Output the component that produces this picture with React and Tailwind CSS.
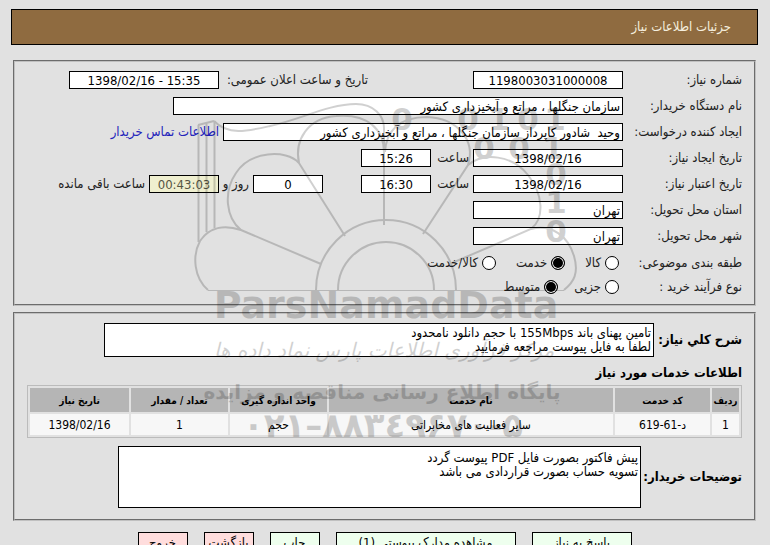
import { useState } from "react";

const inputBase =
  "h-[18px] shrink-0 border border-black px-0.5 text-[13px] leading-4 outline-none";

const Campo = ({ id, value, className, color = "bg-white text-black" }) => (
  <input id={id} type="text" readOnly value={value} className={`${inputBase} ${color} ${className}`} />
);

const Fila = ({ id, label, children }) => (
  <div className="flex h-[18px] items-center gap-1 whitespace-nowrap">
    <label htmlFor={id} className="w-[115px] shrink-0">
      {label}
    </label>
    {children}
  </div>
);

const Opcion = ({ name, label, checked, onChange }) => (
  <label className="flex items-center gap-1">
    <input
      type="radio"
      name={name}
      checked={checked}
      onChange={onChange}
      className="size-[14px] appearance-none rounded-full border border-black bg-white checked:bg-black checked:shadow-[inset_0_0_0_1px_white]"
    />
    {label}
  </label>
);

const columns = [
  { title: "ردیف", width: "w-[27px]" },
  { title: "کد خدمت", width: "w-[95px]" },
  { title: "نام خدمت", width: "" },
  { title: "واحد اندازه گیری", width: "w-[97px]" },
  { title: "تعداد / مقدار", width: "w-[97px]" },
  { title: "تاریخ نیاز", width: "w-[99px]" },
];

const rows = [["1", "د-61-619", "سایر فعالیت های مخابراتی", "حجم", "1", "1398/02/16"]];

const buttons = [
  { text: "پاسخ به نیاز", className: "w-[100px] bg-[#eeffee]" },
  { text: "مشاهده مدارک پیوستی (1)", className: "w-[180px] bg-[#eeffee]" },
  { text: "چاپ", className: "w-[50px] bg-[#eeffee]" },
  { text: "بازگشت", className: "w-[50px] bg-[#ffdddd]" },
  { text: "خروج", className: "w-[50px] bg-[#ffdddd]" },
];

// Dígitos binarios alrededor de la flor
const digits = [
  { x: 402, y: 130, value: "0" },
  { x: 468, y: 130, value: "0" },
  { x: 499, y: 130, value: "1" },
  { x: 528, y: 130, value: "0" },
  { x: 555, y: 130, value: "1" },
  { x: 484, y: 159, value: "0" },
  { x: 519, y: 159, value: "0" },
  { x: 553, y: 159, value: "1" },
  { x: 556, y: 185, value: "0" },
  { x: 556, y: 213, value: "1" },
  { x: 556, y: 242, value: "0" },
];

// Marca de agua sobre toda la ficha
const MarcaDeAgua = () => (
  <svg
    viewBox="190 90 390 360"
    className="pointer-events-none absolute top-[90px] left-1/2 h-[360px] w-[390px] -translate-x-1/2 overflow-visible opacity-[0.18]"
    aria-hidden="true"
  >
    <g fill="none" stroke="black" strokeWidth="2">
      <path d="M208 290C194 278 192 256 200 241C210 226 226 225 241 230L321 264" />
      <path d="M241 230C226 218 223 192 236 173C250 151 286 149 299 163L345 236" />
      <path d="M299 163C294 140 308 118 336 116C368 113 384 130 384 152V225" />
      <path d="M385 152C386 132 398 117 427 117C457 118 476 140 468 165L423 234" />
      <path d="M468 165C484 152 512 155 528 175C543 194 545 218 531 229L452 263" />
      <path d="M531 229C552 224 568 236 574 256C579 273 574 282 564 290" />
      <path d="M316 290A70 70 0 0 1 456 290M338 290A48 48 0 0 1 434 290" />
      <path d="M208 290.500H564" strokeWidth="1" />
      <path d="M198.500 125V242M206.500 123V232M214.500 121V228M198 125L214 121" />
      <path d="M214 121C228 136 248 131 270 126C300 120 328 104 356 104C374 104 384 116 384 128V225" />
    </g>
    <g textAnchor="middle" direction="ltr" fontFamily="DejaVu Sans" fontWeight="bold">
      {digits.map((digit) => (
        <text key={`${digit.x}-${digit.y}`} x={digit.x} y={digit.y} fontSize="31">
          {digit.value}
        </text>
      ))}
      <text x="386" y="318" fontSize="38">
        ParsNamadData
      </text>
      <text x="383" y="437" fontSize="34">
        ۰۲۱–۸۸۳٤۹۶۷۰-۵
      </text>
    </g>
    <g textAnchor="middle" direction="rtl" fontFamily="DejaVu Sans">
      <text x="384" y="357" fontSize="20" fontStyle="italic">
        مرکز فرآوری اطلاعات پارس نماد داده ها
      </text>
      <text x="382" y="399" fontSize="20" fontWeight="bold">
        پایگاه اطلاع رسانی مناقصه و مزایده
      </text>
    </g>
  </svg>
);

const App = () => {
  const [clase, setClase] = useState("خدمت");
  const [proceso, setProceso] = useState("متوسط");

  return (
    <div
      dir="rtl"
      className="relative min-h-screen overflow-hidden bg-[#e1e1e1] pt-[9px] pr-3 pb-2 pl-[11px] font-['DejaVu_Sans_Condensed','DejaVu_Sans',sans-serif] text-[13px] text-[#222222]"
    >
      <header className="flex h-9 items-center border border-black bg-[#8f6b40] px-[26px]">
        <h1 className="text-[#f5efdf]">جزئیات اطلاعات نیاز</h1>
      </header>

      <fieldset className="mx-0.5 mt-[15px] flex flex-col gap-2 border-2 border-[#c0c0c0] px-3 pt-[9px] pb-[7px] [border-style:groove]">
        <Fila id="numero" label="شماره نیاز:">
          <Campo id="numero" value="1198003031000008" className="w-[150px] text-center" />
          <label htmlFor="anuncio" className="ms-[101px] w-[145px] shrink-0">
            تاریخ و ساعت اعلان عمومی:
          </label>
          <Campo id="anuncio" value="15:35 - 1398/02/16" className="w-[150px] text-center" />
        </Fila>
        <Fila id="organismo" label="نام دستگاه خریدار:">
          <Campo id="organismo" value="سازمان جنگلها ، مراتع و آبخیزداری کشور" className="w-[450px]" />
        </Fila>
        <Fila id="creador" label="ایجاد کننده درخواست:">
          <Campo
            id="creador"
            value="وحید  شادور کاپرداز سازمان جنگلها ، مراتع و آبخیزداری کشور"
            className="w-[400px]"
          />
          <a href="#contacto" className="text-[#2222bb]">
            اطلاعات تماس خریدار
          </a>
        </Fila>
        <Fila id="fecha" label="تاریخ ایجاد نیاز:">
          <Campo id="fecha" value="1398/02/16" className="w-[150px] text-center" />
          <label htmlFor="hora" className="w-[34px]">ساعت</label>
          <Campo id="hora" value="15:26" className="w-[70px] text-center" />
        </Fila>
        <Fila id="validez" label="تاریخ اعتبار نیاز:">
          <Campo id="validez" value="1398/02/16" className="w-[150px] text-center" />
          <label htmlFor="horaValidez" className="w-[34px]">ساعت</label>
          <Campo id="horaValidez" value="16:30" className="w-[70px] text-center" />
          <Campo id="dias" value="0" className="ms-[34px] w-[70px] text-center" />
          <label htmlFor="dias" className="w-[26px]">روز و</label>
          <Campo
            id="resto"
            value="00:43:03"
            color="bg-[#efefcf] text-[#555544]"
            className="w-[70px] text-center"
          />
          <label htmlFor="resto">ساعت باقی مانده</label>
        </Fila>
        <Fila id="provincia" label="استان محل تحویل:">
          <Campo id="provincia" value="تهران" className="w-[150px]" />
        </Fila>
        <Fila id="ciudad" label="شهر محل تحویل:">
          <Campo id="ciudad" value="تهران" className="w-[150px]" />
        </Fila>
        <div className="flex h-5 items-center whitespace-nowrap" role="radiogroup">
          <span className="w-[123px]">طبقه بندی موضوعی:</span>
          <div className="flex gap-5">
            {["کالا", "خدمت", "کالا/خدمت"].map((item) => (
              <Opcion
                key={item}
                name="clase"
                label={item}
                checked={clase === item}
                onChange={() => setClase(item)}
              />
            ))}
          </div>
        </div>
        <div className="-mt-1 flex h-5 items-center whitespace-nowrap" role="radiogroup">
          <span className="w-[123px]">نوع فرآیند خرید :</span>
          <div className="flex gap-4">
            {["جزیی", "متوسط"].map((item) => (
              <Opcion
                key={item}
                name="proceso"
                label={item}
                checked={proceso === item}
                onChange={() => setProceso(item)}
              />
            ))}
          </div>
        </div>
      </fieldset>

      <fieldset className="mx-0.5 mt-1.5 border-2 border-[#c0c0c0] px-3 pt-[9px] pb-[11px] [border-style:groove]">
        <div className="flex items-center gap-1">
          <label htmlFor="descripcion" className="w-[84px] shrink-0 whitespace-nowrap font-bold text-black">
            شرح کلي نیاز:
          </label>
          <textarea
            id="descripcion"
            readOnly
            className="h-[34px] w-[550px] resize-none overflow-hidden border border-black bg-white px-0.5 pt-0.5 text-[13px] leading-[14px] text-black outline-none"
            value={"تامین پهنای باند 155Mbps با حجم دانلود نامحدود\nلطفا به فایل پیوست مراجعه فرمایید"}
          />
        </div>

        <h2 className="mt-2 leading-4 font-bold text-black">اطلاعات خدمات مورد نیاز</h2>

        <table className="mt-1 w-full table-fixed border-separate border-spacing-0.5 border border-[#bbbbbb] text-center text-black">
          <thead className="text-[10px]">
            <tr className="h-6">
              {columns.map((col) => (
                <th key={col.title} className={`bg-[#b5b5b5] p-0 whitespace-nowrap ${col.width}`}>
                  {col.title}
                </th>
              ))}
            </tr>
          </thead>
          <tbody className="text-xs">
            {rows.map((row, index) => (
              <tr key={index} className="h-[21px]">
                {row.map((cell, i) => (
                  <td key={i} className="bg-[#f7f7f7] p-0">
                    {cell}
                  </td>
                ))}
              </tr>
            ))}
          </tbody>
        </table>

        <div className="mt-2 flex items-center gap-1">
          <label htmlFor="notas" className="w-[97px] shrink-0 whitespace-nowrap font-bold text-black">
            توضیحات خریدار:
          </label>
          <textarea
            id="notas"
            readOnly
            className="h-[62px] w-[523px] resize-none overflow-hidden border border-black bg-white px-0.5 pt-1 text-[13px] leading-[14px] text-black outline-none"
            value={"پیش فاکتور بصورت فایل PDF پیوست گردد\nتسویه حساب بصورت قراردادی می باشد"}
          />
        </div>
      </fieldset>

      <div className="mt-[11px] flex justify-center gap-4">
        {buttons.map((button) => (
          <button
            key={button.text}
            type="button"
            className={`h-[22px] overflow-hidden border border-black text-[13px] leading-5 whitespace-nowrap text-black ${button.className}`}
          >
            {button.text}
          </button>
        ))}
      </div>

      <MarcaDeAgua />
    </div>
  );
};

export default App;
